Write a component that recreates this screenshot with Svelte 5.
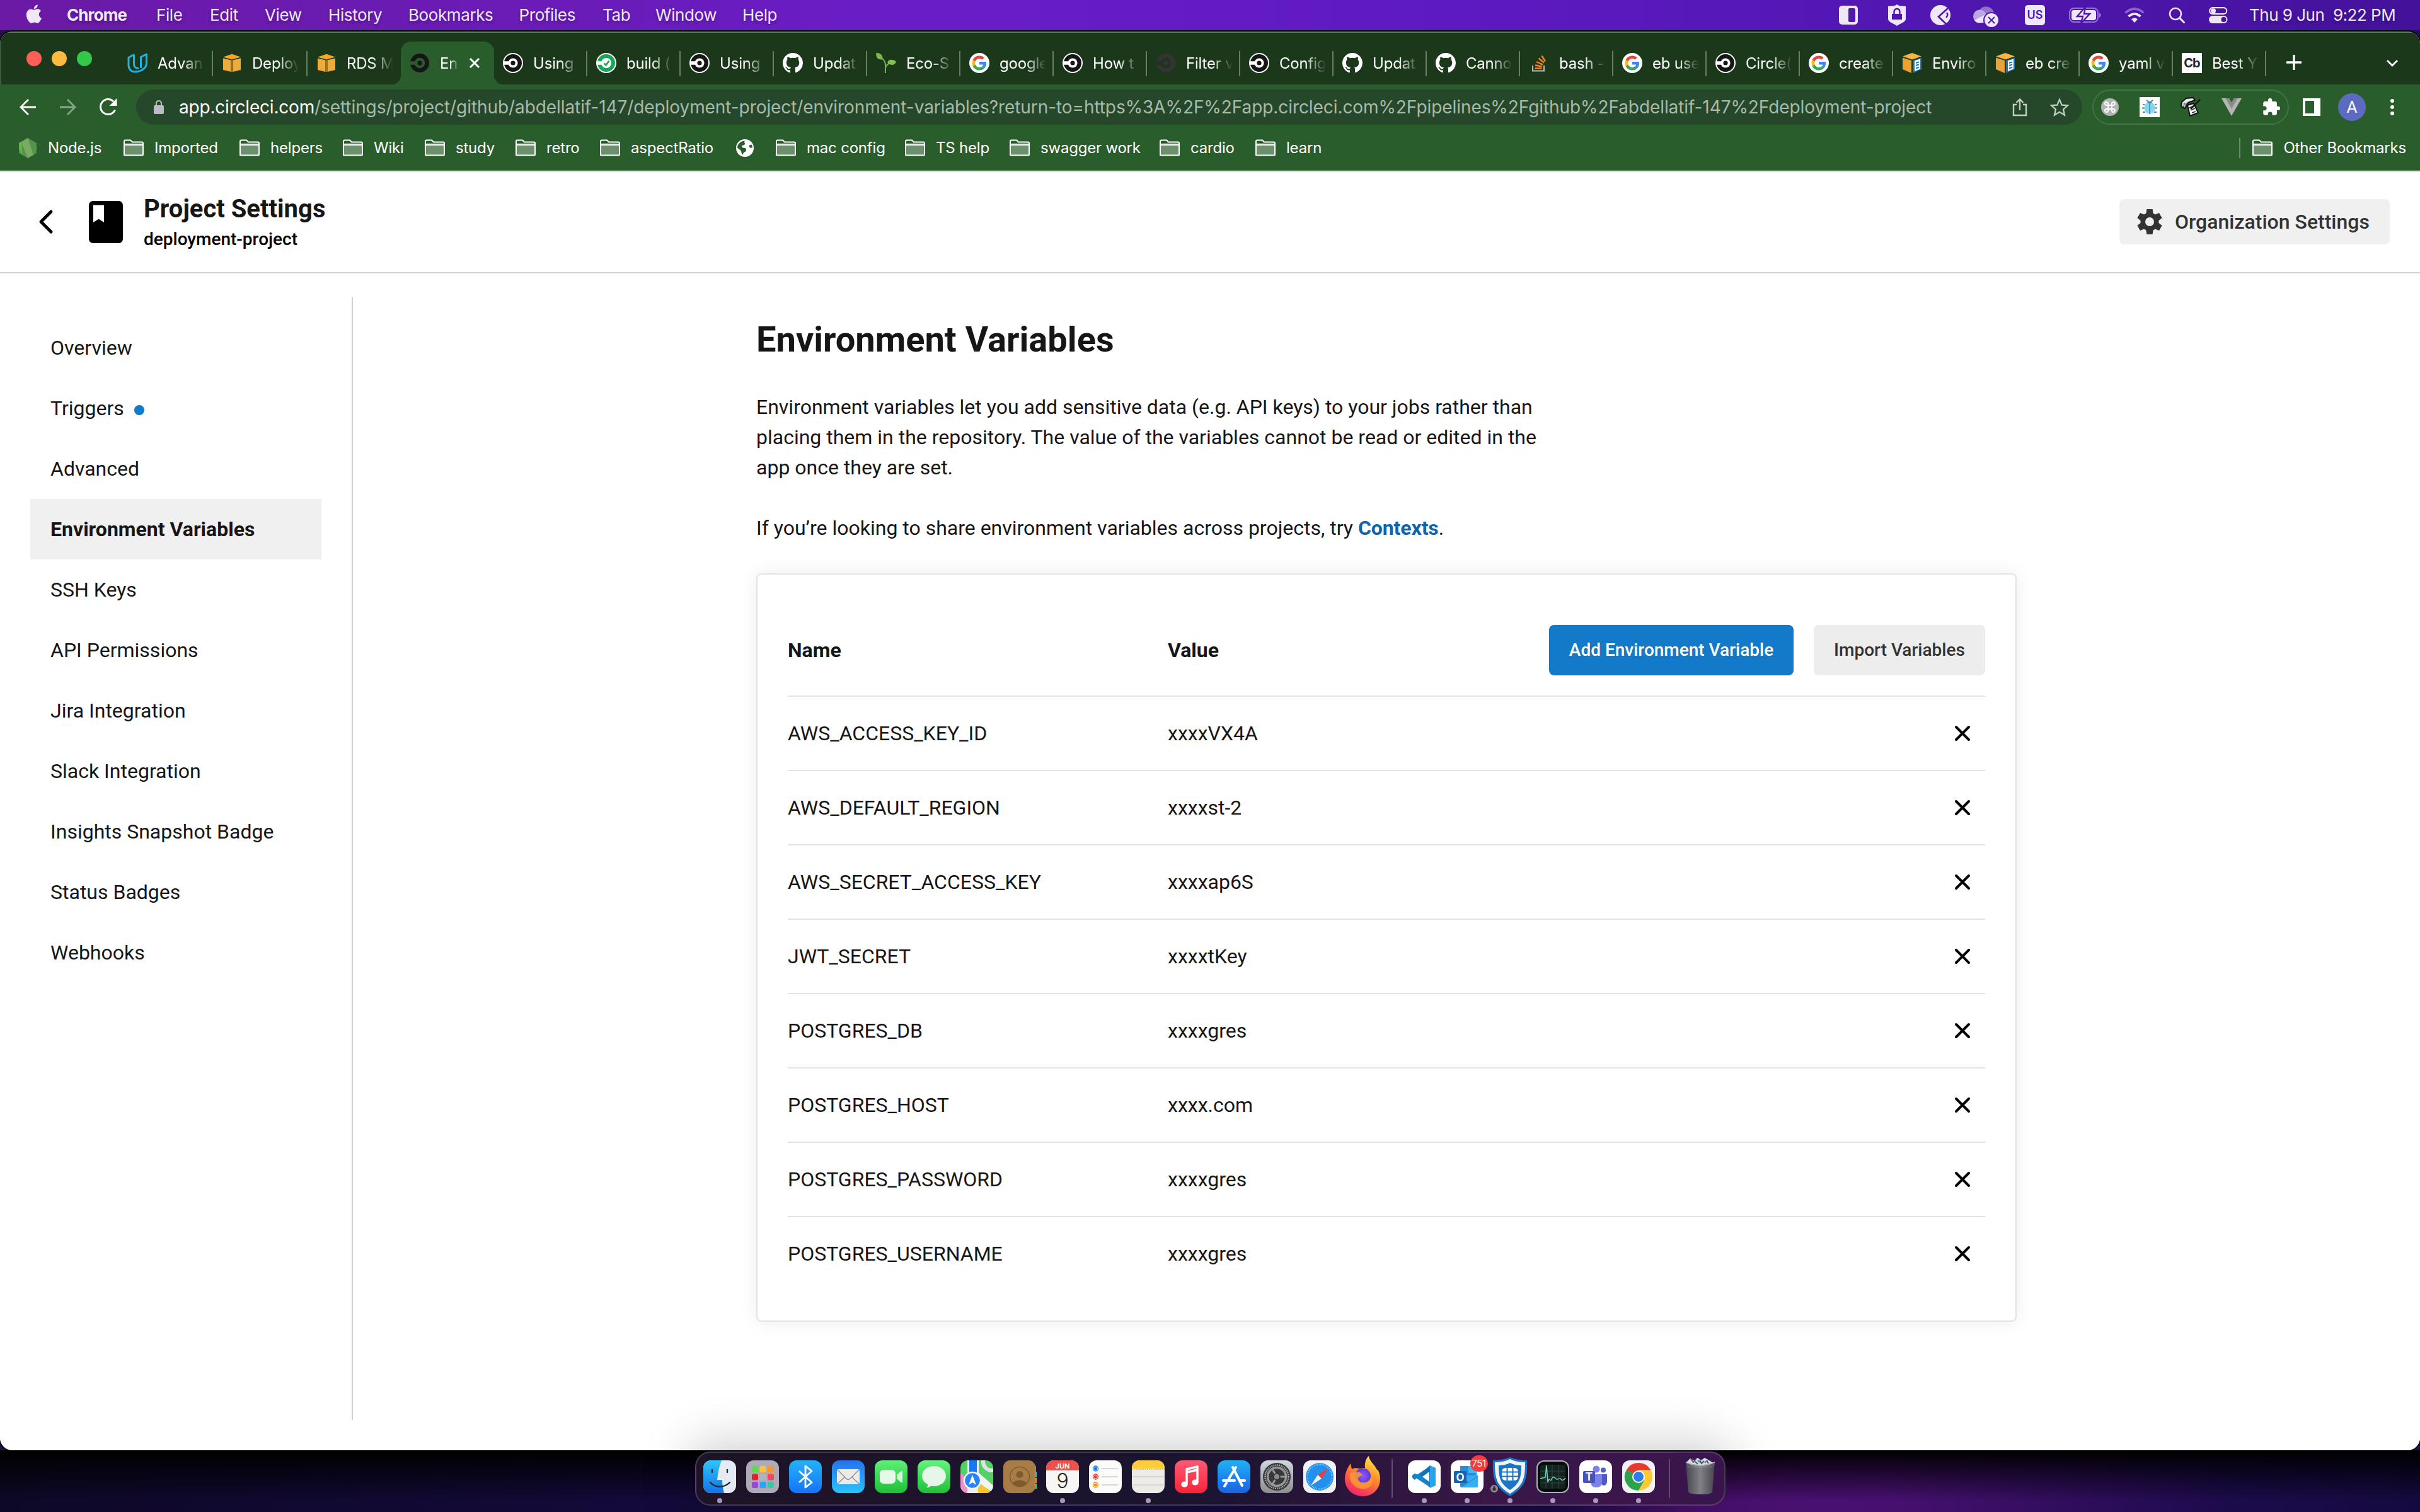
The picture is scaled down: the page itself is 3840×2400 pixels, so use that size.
<script>
  const menus = [
    { label: 'File', w: 85 },
    { label: 'Edit', w: 87 },
    { label: 'View', w: 101 },
    { label: 'History', w: 127 },
    { label: 'Bookmarks', w: 175.5 },
    { label: 'Profiles', w: 132.5 },
    { label: 'Tab', w: 84 },
    { label: 'Window', w: 138 },
    { label: 'Help', w: 60 },
  ];

  const tabs = [
    { icon: 'udacity', title: 'Advan', wide: true },
    { icon: 'aws', title: 'Deploy', wide: true },
    { icon: 'aws', title: 'RDS M', last: true },
    { icon: 'circle-dark', title: 'En', active: true },
    { icon: 'circle', title: 'Using' },
    { icon: 'build', title: 'build (' },
    { icon: 'circle', title: 'Using' },
    { icon: 'github', title: 'Updat' },
    { icon: 'eco', title: 'Eco-S' },
    { icon: 'google', title: 'google' },
    { icon: 'circle', title: 'How t' },
    { icon: 'circle-faded', title: 'Filter v' },
    { icon: 'circle', title: 'Config' },
    { icon: 'github', title: 'Updat' },
    { icon: 'github', title: 'Canno' },
    { icon: 'stack', title: 'bash -' },
    { icon: 'google', title: 'eb use' },
    { icon: 'circle', title: 'Circle(' },
    { icon: 'google', title: 'create' },
    { icon: 'beanstalk', title: 'Enviro' },
    { icon: 'beanstalk', title: 'eb cre' },
    { icon: 'google', title: 'yaml v' },
    { icon: 'cb', title: 'Best Y' },
  ];

  const bookmarks = [
    { icon: 'node', label: 'Node.js', w: 166 },
    { icon: 'folder', label: 'Imported', w: 184 },
    { icon: 'folder', label: 'helpers', w: 164 },
    { icon: 'folder', label: 'Wiki', w: 130 },
    { icon: 'folder', label: 'study', w: 144 },
    { icon: 'folder', label: 'retro', w: 134 },
    { icon: 'folder', label: 'aspectRatio', w: 216 },
    { icon: 'globe', label: '', w: 63 },
    { icon: 'folder', label: 'mac config', w: 205 },
    { icon: 'folder', label: 'TS help', w: 166 },
    { icon: 'folder', label: 'swagger work', w: 238 },
    { icon: 'folder', label: 'cardio', w: 152 },
    { icon: 'folder', label: 'learn', w: 110 },
  ];

  const nav = [
    'Overview', 'Triggers', 'Advanced', 'Environment Variables', 'SSH Keys',
    'API Permissions', 'Jira Integration', 'Slack Integration',
    'Insights Snapshot Badge', 'Status Badges', 'Webhooks',
  ];

  const variables = [
    ['AWS_ACCESS_KEY_ID', 'xxxxVX4A'],
    ['AWS_DEFAULT_REGION', 'xxxxst-2'],
    ['AWS_SECRET_ACCESS_KEY', 'xxxxap6S'],
    ['JWT_SECRET', 'xxxxtKey'],
    ['POSTGRES_DB', 'xxxxgres'],
    ['POSTGRES_HOST', 'xxxx.com'],
    ['POSTGRES_PASSWORD', 'xxxxgres'],
    ['POSTGRES_USERNAME', 'xxxxgres'],
  ];

  const dockMain = [
    { icon: 'finder', running: true }, { icon: 'launchpad' }, { icon: 'bluetooth' }, { icon: 'mail' },
    { icon: 'facetime' }, { icon: 'messages' }, { icon: 'maps' }, { icon: 'contacts' },
    { icon: 'calendar', running: true }, { icon: 'reminders' }, { icon: 'notes', running: true },
    { icon: 'music' }, { icon: 'appstore' }, { icon: 'settings' }, { icon: 'safari' }, { icon: 'firefox' },
  ];
  const dockRecent = ['vscode', 'outlook', 'shield', 'activity', 'teams', 'chrome'];
  const spokes = [0, 60, 120, 180, 240, 300];
  const padColors = ['#5fdc4a', '#ffc53a', '#f8962b', '#d92632', '#a9b5c0', '#f6455e', '#9a46d8', '#27a6f5', '#37c9a5'];
</script>

{#snippet googleG()}
  <path fill="#EA4335" d="M24 9.5c3.54 0 6.71 1.22 9.21 3.6l6.85-6.85C35.9 2.38 30.47 0 24 0 14.62 0 6.51 5.38 2.56 13.22l7.98 6.19C12.43 13.72 17.74 9.5 24 9.5z" />
  <path fill="#4285F4" d="M46.98 24.55c0-1.57-.15-3.09-.38-4.55H24v9.02h12.94c-.58 2.96-2.26 5.48-4.78 7.18l7.73 6c4.51-4.18 7.09-10.36 7.09-17.65z" />
  <path fill="#FBBC05" d="M10.53 28.59c-.48-1.45-.76-2.99-.76-4.59s.27-3.14.76-4.59l-7.98-6.19C.92 16.46 0 20.12 0 24c0 3.88.92 7.54 2.56 10.78l7.97-6.19z" />
  <path fill="#34A853" d="M24 48c6.48 0 11.93-2.13 15.89-5.81l-7.73-6c-2.15 1.45-4.92 2.3-8.16 2.3-6.26 0-11.57-4.22-13.47-9.91l-7.98 6.19C6.51 42.62 14.62 48 24 48z" />
{/snippet}

{#snippet ring(color, gap)}
  <circle cx="16" cy="16" r="15" fill={color} />
  <circle cx="16" cy="16" r="8.2" fill={gap} />
  <path d="M0 13.2H12v5.6H0z" fill={gap} />
  <circle cx="16" cy="16" r="3.8" fill={color} />
{/snippet}

{#snippet favicon(kind)}
  <svg class="favicon" viewBox="0 0 32 32">
    {#if kind === 'udacity'}
      <path d="M10.5 2.5 2 7.5v12c0 6 4 10.5 10 10.5 8 0 18.500-4.500 18.500-14V2L21.500 6.500V24M10.500 2.500V18c0 4 3 6.500 7.500 6.500" fill="none" stroke="#1fb3e5" stroke-width="3" stroke-linejoin="round" />
    {:else if kind === 'aws'}
      <path d="M2 6.500 16 1.800l14 4.700-14 4z" fill="#f5a623" />
      <path d="M2 8.500 14.500 11.500V30L2 27z" fill="#edab3c" />
      <path d="M17.500 11.500 30 8.500V27l-12.500 3z" fill="#edab3c" />
      <path d="M14.500 11.500h3V30h-3z" fill="#94761f" />
    {:else if kind === 'circle-dark'}
      {@render ring('#161616', '#2a5d2c')}
    {:else if kind === 'circle-faded'}
      {@render ring('#333433', '#22331f')}
    {:else if kind === 'circle'}
      <circle cx="16" cy="16" r="16" fill="#fff" />
      <circle cx="16" cy="16" r="14" fill="#161616" />
      <circle cx="16" cy="16" r="7.600" fill="#fff" />
      <path d="M1 13.200h10v5.600H1z" fill="#fff" />
      <circle cx="16" cy="16" r="3.600" fill="#161616" />
    {:else if kind === 'build'}
      <circle cx="16" cy="16" r="16" fill="#fff" />
      <circle cx="16" cy="16" r="14" fill="#1ba558" />
      <circle cx="16" cy="16" r="8" fill="#fff" />
      <path d="M1 13.200h10v5.600H1z" fill="#fff" />
      <path d="m12.500 16.500 3 3 5-7" fill="none" stroke="#1ba558" stroke-width="2.600" />
    {:else if kind === 'github'}
      <path transform="scale(2)" fill="#fff" d="M8 0C3.580 0 0 3.580 0 8c0 3.540 2.290 6.530 5.470 7.590.4.070.55-.17.55-.38 0-.19-.01-.82-.01-1.490-2.010.37-2.530-.49-2.690-.94-.09-.23-.48-.94-.82-1.130-.28-.15-.68-.52-.01-.53.63-.01 1.080.58 1.230.82.72 1.210 1.870.87 2.330.66.07-.52.28-.87.51-1.070-1.780-.2-3.640-.89-3.640-3.950 0-.87.31-1.590.82-2.150-.08-.2-.36-1.020.08-2.120 0 0 .67-.21 2.200.82.64-.18 1.320-.27 2-.27s1.360.09 2 .27c1.530-1.040 2.200-.82 2.200-.82.44 1.100.16 1.920.08 2.120.51.56.82 1.270.82 2.150 0 3.070-1.870 3.750-3.650 3.950.29.25.54.73.54 1.480 0 1.070-.01 1.930-.01 2.200 0 .21.15.46.55.38A8.010 8.010 0 0 0 16 8c0-4.420-3.580-8-8-8z" />
    {:else if kind === 'eco'}
      <path d="M15 32V20C15 12 11 10 6 5m9 19c1-5 4-7 10-9" fill="none" stroke="#74b04b" stroke-width="2" />
      <path d="M0 0c7 0 11 3 10.500 10C4 12 0 8 0 0z" fill="#7fb94e" />
      <path d="M18 15c2-5 9-6 14-1-2 6-9 7-14 1z" fill="#84c04e" />
    {:else if kind === 'google'}
      <circle cx="16" cy="16" r="16" fill="#fff" />
      <g transform="translate(4.500 4.500) scale(.48)">{@render googleG()}</g>
    {:else if kind === 'stack'}
      <path d="M6 20v8.500h18V20" fill="none" stroke="#b8bcc0" stroke-width="2" />
      <path d="M9.500 24.500h11M10 19.500l10.800 2M12 14l10 4.600M15.500 8.500l8.500 7M20.500 4.500l5.500 9" stroke="#f48024" stroke-width="2.400" />
    {:else if kind === 'beanstalk'}
      <path d="M1 5.500 16 0l15 5.500-15 5z" fill="#f6b545" />
      <path d="M1 7.500 15 12v20L1 26z" fill="#e9a234" />
      <path d="M17 12 31 7.500V26l-14 6z" fill="#1a76b5" />
      <path d="M20 12.500 29 9.500v16l-9 3.500z" fill="#fff" />
      <path d="m22 16 5-1.600M22 20l5-1.600M22 24.500l5-1.600" stroke="#1a76b5" stroke-width="2" />
    {:else if kind === 'cb'}
      <path d="M0 0h32v32H0z" fill="#fff" />
      <text x="16" y="23" text-anchor="middle" class="cb">Cb</text>
    {/if}
  </svg>
{/snippet}

{#snippet folder()}
  <svg class="bm-icon" viewBox="0 0 32 32">
    <path d="M1 8h30v19H1z" fill="#6c906c" />
    <path d="M1 28V5.500q0-2 2-2h8l3 3h15q2 0 2 2V26.500q0 1-1 1H2q-1 0-1-1zM1 11h30" fill="none" stroke="#fff" stroke-width="2" />
  </svg>
{/snippet}

{#snippet dockIcon(kind)}
  <svg class="app" viewBox="0 0 52 52">
    {#if kind === 'finder'}
      <defs><linearGradient id="fi" x2="0" y2="1"><stop stop-color="#2ec5fa" /><stop offset="1" stop-color="#1672e6" /></linearGradient></defs>
      <rect width="52" height="52" rx="12" fill="#e6ebf3" />
      <path d="M12 0H29c-4 10-6 20-7 31h8c0 7 1 14 3 21H12A12 12 0 0 1 0 40V12A12 12 0 0 1 12 0z" fill="url(#fi)" />
      <path d="M14 15v4M38 15v4M11 35c8 9 22 9 31 0" fill="none" stroke="#1c2c3e" stroke-width="2.400" stroke-linecap="round" />
    {:else if kind === 'launchpad'}
      <rect width="52" height="52" rx="12" fill="#aeabb7" />
      {#each padColors as c, i}
        <rect x={9 + (i % 3) * 12.500} y={9 + Math.floor(i / 3) * 12.500} width="10" height="10" rx="2.500" fill={c} />
      {/each}
    {:else if kind === 'bluetooth'}
      <defs><linearGradient id="bt" x2="0" y2="1"><stop stop-color="#23b2fb" /><stop offset="1" stop-color="#1574f6" /></linearGradient></defs>
      <rect width="52" height="52" rx="12" fill="url(#bt)" />
      <path d="m16 17 20 18-10 8V9l10 8-20 18" fill="none" stroke="#fff" stroke-width="2.800" stroke-linejoin="round" />
    {:else if kind === 'mail'}
      <defs><linearGradient id="ml" x2="0" y2="1"><stop stop-color="#2571ee" /><stop offset="1" stop-color="#28c4fb" /></linearGradient></defs>
      <rect width="52" height="52" rx="12" fill="url(#ml)" />
      <rect x="8" y="14" width="36" height="24" rx="3" fill="#ecebea" />
      <path d="m9 15 14 14q3 3 6 0l14-14M9 37l12-11m22 11L31 26" fill="none" stroke="#8c8c8c" stroke-width="1.300" />
    {:else if kind === 'facetime'}
      <defs><linearGradient id="ft" x2="0" y2="1"><stop stop-color="#5ff077" /><stop offset="1" stop-color="#1fbf38" /></linearGradient></defs>
      <rect width="52" height="52" rx="12" fill="url(#ft)" />
      <rect x="8" y="15" width="25" height="22" rx="6" fill="#e6f8e8" />
      <path d="m35 23 7-6q2-1 2 1v16q0 2-2 1l-7-6z" fill="#d7f3da" />
    {:else if kind === 'messages'}
      <defs><linearGradient id="ms" x2="0" y2="1"><stop stop-color="#65f47d" /><stop offset="1" stop-color="#1fbf38" /></linearGradient></defs>
      <rect width="52" height="52" rx="12" fill="url(#ms)" />
      <path d="M26 9c11 0 19 7 19 16s-8 16-19 16l-5-.5c-1 1.500-4 3-7 2.500 1.500-1 2.500-3 2-5C10 35 7 30 7 25 7 16 15 9 26 9z" fill="#e5f8e7" />
    {:else if kind === 'maps'}
      <defs><clipPath id="mp"><rect width="52" height="52" rx="12" /></clipPath></defs>
      <g clip-path="url(#mp)">
        <path d="M0 0h52v52H0z" fill="#56cf66" />
        <path d="M0 20c8 6 12 14 12 32H0z" fill="#ef8fcb" />
        <path d="M11 0h18v52H11z" fill="#e9edf4" />
        <path d="m27 18 25 22v12L27 34z" fill="#f4f4f2" />
        <path d="m28 34 22 18H28z" fill="#fcc52d" />
        <circle cx="50" cy="2" r="14" fill="none" stroke="#dfe5e4" stroke-width="6" />
        <path d="M14 0h12v24H14z" fill="#1877f2" />
        <circle cx="19" cy="32" r="13" fill="#2384fb" stroke="#f4f7fb" stroke-width="2.500" />
        <path d="m19 23 6 16-6-4-6 4z" fill="#fff" />
      </g>
    {:else if kind === 'contacts'}
      <path d="M44 9h8v9h-8z" fill="#8f9099" /><path d="M44 18h9v9h-9z" fill="#4db7e9" />
      <path d="M44 28h9v8h-9z" fill="#f38a2e" /><path d="M44 37h9v8h-9z" fill="#4fce65" />
      <rect width="51" height="52" rx="11" fill="#a87c46" />
      <circle cx="26" cy="26" r="15.500" fill="none" stroke="#805a2d" stroke-width="1.500" />
      <circle cx="26" cy="22.500" r="5.500" fill="#805a2d" />
      <path d="M15 36c3-6 19-6 22 0-5 6.500-17 6.500-22 0z" fill="#805a2d" />
    {:else if kind === 'calendar'}
      <rect width="52" height="52" rx="12" fill="#f7f6f4" />
      <path d="M12 0h28a12 12 0 0 1 12 12v4H0v-4A12 12 0 0 1 12 0z" fill="#ee5149" />
      <text x="26" y="12.500" text-anchor="middle" class="month">JUN</text>
      <text x="26" y="43.500" text-anchor="middle" class="day">9</text>
    {:else if kind === 'reminders'}
      <rect width="52" height="52" rx="12" fill="#fbfbfa" />
      {#each ['#1878f0', '#ec3b36', '#f08d20'] as c, i}
        <circle cx="10.500" cy={13 + i * 13} r="4" fill="none" stroke={c} stroke-width="1.300" />
        <circle cx="10.500" cy={13 + i * 13} r="2.600" fill={c} />
        <path d="M20 {13 + i * 13}h26" stroke="#cfcfcf" stroke-width="1.600" />
      {/each}
    {:else if kind === 'notes'}
      <rect width="52" height="52" rx="12" fill="#edebe5" />
      <path d="M12 0h28a12 12 0 0 1 12 12v1H0v-1A12 12 0 0 1 12 0z" fill="#fccc3a" />
      <path d="M0 14h52" stroke="#c9c3b2" stroke-dasharray="1.500 1.500" stroke-width="2" />
      <path d="M0 26h52M0 39h52" stroke="#d3d0ca" stroke-width="1.500" />
    {:else if kind === 'music'}
      <defs><linearGradient id="mu" x2="0" y2="1"><stop stop-color="#fb5b74" /><stop offset="1" stop-color="#f9233c" /></linearGradient></defs>
      <rect width="52" height="52" rx="12" fill="url(#mu)" />
      <path d="M19 37V14l17-4v24M19 19l17-4" fill="none" stroke="#fff" stroke-width="3.400" stroke-linejoin="round" />
      <ellipse cx="15.500" cy="38" rx="5.200" ry="4.600" fill="#fff" /><ellipse cx="32.500" cy="35" rx="5.200" ry="4.600" fill="#fff" />
    {:else if kind === 'appstore'}
      <defs><linearGradient id="as" x2="0" y2="1"><stop stop-color="#21b0f4" /><stop offset="1" stop-color="#1a62e2" /></linearGradient></defs>
      <rect width="52" height="52" rx="12" fill="url(#as)" />
      <path d="M29 11 18 29m-4 7-3 5M24 11l15 29M9 32h18m9 0h7" stroke="#fff" stroke-width="4" stroke-linecap="round" />
    {:else if kind === 'settings'}
      <defs><linearGradient id="st" x2="0" y2="1"><stop stop-color="#ced8df" /><stop offset="1" stop-color="#8d8d8f" /></linearGradient></defs>
      <rect width="52" height="52" rx="12" fill="url(#st)" />
      <circle cx="26" cy="26" r="22" fill="#38383a" />
      <circle cx="26" cy="26" r="18.500" fill="none" stroke="#a4a4a6" stroke-width="2.500" stroke-dasharray="1.800 1.200" />
      <circle cx="26" cy="26" r="14.500" fill="none" stroke="#97979a" stroke-width="3.500" />
      <path d="M26 26h14M26 26l-7-12M26 26l-7 12" stroke="#97979a" stroke-width="3" />
      <circle cx="26" cy="26" r="5" fill="#8a8a8c" stroke="#333" stroke-width="1.500" />
    {:else if kind === 'safari'}
      <rect width="52" height="52" rx="12" fill="#f2f2f3" />
      <circle cx="26" cy="26" r="22" fill="#2490ee" />
      <circle cx="26" cy="26" r="19.500" fill="none" stroke="#a5d4fa" stroke-width="2.500" stroke-dasharray=".8 1.700" />
      <path d="m40 12-11 17-6-6z" fill="#ee3c3c" /><path d="m12 40 11-17 6 6z" fill="#f3f3f5" />
    {:else if kind === 'firefox'}
      <defs>
        <linearGradient id="ff" x1=".8" y1="0" x2=".3" y2="1"><stop stop-color="#fff04a" /><stop offset=".45" stop-color="#ff8a2a" /><stop offset="1" stop-color="#f41e6e" /></linearGradient>
        <radialGradient id="fp"><stop stop-color="#9059ff" /><stop offset="1" stop-color="#5c3ad6" /></radialGradient>
      </defs>
      <path d="M36-7c1 9 9 13 13 22l2 1c9 20-3 41-24 41C8 57-3 43-2 27-1 18 2 13 7 5l2 9C12 12 16 12 20 13l10-1C29 5 31-3 36-7z" fill="url(#ff)" />
      <circle cx="26.500" cy="25" r="12.500" fill="url(#fp)" />
      <path d="M6 22c5-5 12-3 16-3l4 4c-2 2-6 2-7 5-1 4 4 8 10 7 8-1 12-7 10-14 9 15-1 25-14 24C13 44 4 34 6 22z" fill="#ff9a30" opacity=".85" />
    {:else if kind === 'vscode'}
      <rect width="52" height="52" rx="12" fill="#fff" />
      <path d="m35 8-24 22-4-3v-3l4-3 24 22z" fill="#1272b8" />
      <path d="m11 21-4 3 27 18 1-12zM7 28l4 3L35 9z" fill="#1684cc" />
      <path d="m35 8 9 4v28l-9 4z" fill="#2aa3ee" /><path d="M34 18v16L23 26z" fill="#fff" />
    {:else if kind === 'outlook'}
      <rect width="52" height="52" rx="12" fill="#fff" />
      <path d="M15 9h26v20H15z" fill="#1f8fe0" /><path d="M28 9h13v11H28z" fill="#43b5f0" />
      <path d="M15 24 43 24V41q0 2-2 2H17q-2 0-2-2z" fill="#36aef0" /><path d="m15 25 14 9 14-10v2L17 43l-2-2z" fill="#1668b8" opacity=".5" />
      <rect x="5" y="17" width="20" height="19" rx="2" fill="#0f64b8" />
      <text x="15" y="32.500" text-anchor="middle" class="tile-letter">O</text>
    {:else if kind === 'shield'}
      <path d="M26-5c9 4 18 5 27 5 1 29-2 42-27 57C1 42-2 29-1 0 8 0 17-1 26-5z" fill="#1b75c5" />
      <path d="M26-2c8 4 16 5 24 5 0 27-3 37-24 50C5 40 2 30 2 3c8 0 16-1 24-5z" fill="#f0f3f6" />
      <path d="M26 4c6 3 12 4 18 4 0 20-3 29-18 39C11 37 8 28 8 8c6 0 12-1 18-4z" fill="#1c74c4" />
      <rect x="13" y="12" width="26" height="20" rx="6" fill="#fff" />
      <path d="M21.500 12v20M30.500 12v20M13 18.500h26M13 25.500h26" stroke="#1c74c4" stroke-width="2" />
      <circle cx="1" cy="45" r="6" fill="#8b8b8e" /><path d="M-1.500 44h5v4h-5zM-.5 44v-2q1.500-2 3 0v2" fill="#333" />
    {:else if kind === 'activity'}
      <rect width="52" height="52" rx="12" fill="#a9b2b8" /><rect x="2" y="2" width="48" height="48" rx="10" fill="#08090a" />
      <rect x="6" y="7" width="40" height="38" rx="4" fill="#14231f" />
      <path d="M6 17h40M6 26h40M6 36h40M15 7v38M25 7v38M35 7v38" stroke="#2a4a42" stroke-width="1" />
      <path d="M6 29c4-2 6 0 8-2l2-19 2 27c3-11 4 1 6-5 3-8 6 0 8 0l6-1c2 3 4 4 8-1" fill="none" stroke="#74cdb6" stroke-width="1.500" />
    {:else if kind === 'teams'}
      <rect width="52" height="52" rx="12" fill="#fff" />
      <circle cx="38" cy="15.500" r="4" fill="#5059c9" /><circle cx="27" cy="14" r="5.500" fill="#7b83eb" />
      <path d="M34 22h10v11q0 6-5 7-5-1-5-6z" fill="#5059c9" /><path d="M18 22h18v12q0 9-9 9t-9-9z" fill="#7b83eb" />
      <rect x="6" y="17" width="19" height="19" rx="2" fill="#4a53bb" />
      <text x="15.500" y="32" text-anchor="middle" class="tile-letter">T</text>
    {:else if kind === 'chrome'}
      <rect width="52" height="52" rx="12" fill="#f2f2f4" />
      <path d="M26 26 6.900 15A22 22 0 0 1 45.100 15z" fill="#e33b2e" />
      <path d="M26 26 6.900 15A22 22 0 0 0 26 48l9.500-16.500z" fill="#2da24c" />
      <path d="M26 26V15h19.100A22 22 0 0 1 26 48l9.500-16.500z" fill="#fcc934" />
      <circle cx="26" cy="26" r="10" fill="#fff" /><circle cx="26" cy="26" r="8" fill="#2f7be8" />
    {:else if kind === 'trash'}
      <defs><linearGradient id="tr"><stop stop-color="#48494d" /><stop offset=".5" stop-color="#88898c" /><stop offset="1" stop-color="#47474b" /></linearGradient></defs>
      <path d="m4 3 6-6 6 3 6-4 5 4 6-4 7 4 8 5-2 7H6z" fill="#dcdcde" />
      <path d="m11-2 4 5 4-5m6 2 3 5 4-4m4-1 3 5M18 2l4 4" stroke="#4d565e" stroke-width="2" fill="none" /><path d="m22 0 3 3m8 1 3-3" stroke="#2d8cd0" stroke-width="2" />
      <path d="M3 3q23 10 46 0l-4 47q-1 4-19 4T7 50z" fill="url(#tr)" opacity=".93" />
      <path d="M3 3q23 10 46 0" fill="none" stroke="#b4b4b8" stroke-width="1.600" />
    {/if}
  </svg>
{/snippet}

<div class="screen">
  <header class="menubar">
    <svg class="apple" viewBox="0 0 26 32"><path fill="#efe8f8" d="M21.400 16.900c0-3.500 2.900-5.200 3-5.300-1.700-2.400-4.200-2.700-5.100-2.800-2.200-.2-4.200 1.300-5.300 1.300s-2.800-1.200-4.600-1.200c-2.300 0-4.500 1.400-5.700 3.500-2.500 4.200-.6 10.500 1.700 13.900 1.200 1.700 2.500 3.600 4.400 3.500 1.800-.1 2.400-1.100 4.600-1.100 2.100 0 2.700 1.100 4.600 1.100s3.100-1.700 4.300-3.400c1.300-2 1.900-3.900 1.900-4-.1 0-3.800-1.400-3.800-5.500zM17.900 6.700c1-1.200 1.600-2.800 1.400-4.400-1.400.1-3.100.9-4 2.100-.9 1-1.700 2.700-1.500 4.200 1.500.1 3.100-.8 4.100-1.900z" /></svg>
    <span class="app-name">Chrome</span>
    {#each menus as m}
      <span class="menu" style:width="{m.w}px">{m.label}</span>
    {/each}
    <div class="status">
      <svg class="s30" viewBox="0 0 30 30"><rect width="30" height="30" rx="5" fill="#eee7fa" /><rect x="15" y="4" width="11" height="22" rx="2" fill="#5216b0" /></svg>
      <svg class="s-shield" viewBox="0 0 30 34"><path d="M15 0c4 3 8 2.500 14 3v20c0 5-8 7-14 11C9 30 1 28 1 23V3c6-.5 10 0 14-3z" fill="#eee7fa" /><path d="M7 15h16v9H7z" fill="#5015ad" /><path d="M10.500 15v-3q0-5 4.500-5t4.500 5v3" fill="none" stroke="#5015ad" stroke-width="2.400" /></svg>
      <svg class="s-pac" viewBox="0 0 32 32"><circle cx="16" cy="16" r="16" fill="#eee7fa" /><path d="M28 5 13 18.500 25 30" fill="none" stroke="#5015ad" stroke-width="2.600" /><path d="M26 12q3 4-1 8" fill="none" stroke="#5015ad" stroke-width="2.400" /></svg>
      <svg class="s-cloud" viewBox="0 0 42 36"><path d="M10 8C13-1 29-1 33 11l-12 8z" fill="#9270cf" /><circle cx="10.500" cy="17" r="10.500" fill="#bba7e3" /><path d="M2 23 24 12l8 15H9q-5 0-7-4z" fill="#eee7fa" /><circle cx="29" cy="23" r="13" fill="#5015ad" /><circle cx="29" cy="23" r="11" fill="#eee7fa" /><path d="m24 18 10 10m0-10L24 28" stroke="#5015ad" stroke-width="2" /></svg>
      <span class="lang">US</span>
      <svg class="s-batt" viewBox="0 0 52 26"><rect x="1" y="2" width="45" height="22" rx="7" fill="none" stroke="#9673d3" stroke-width="2" /><path d="M48 9q6 4 0 8z" fill="#9673d3" /><rect x="4" y="5" width="39" height="16" rx="4" fill="#eee7fa" /><path d="M26 0 13 15h9l-3 11 14-15h-9z" fill="#eee7fa" stroke="#4e15ab" stroke-width="2.400" /></svg>
      <svg class="s-wifi" viewBox="0 0 32 24"><path d="M1.500 8.500q14.500-13 29 0" fill="none" stroke="#8a63cd" stroke-width="3.600" /><path d="M6.500 14q9.500-8 19 0" fill="none" stroke="#eee7fa" stroke-width="3.600" /><path d="M11 18.500q5-4 10 0L16 24z" fill="#eee7fa" /></svg>
      <svg class="s-search" viewBox="0 0 28 26"><circle cx="11" cy="11" r="9" fill="none" stroke="#eee7fa" stroke-width="2.600" /><path d="m17.500 17.500 7 7" stroke="#eee7fa" stroke-width="3" stroke-linecap="round" /></svg>
      <svg class="s-cc" viewBox="0 0 30 26"><rect x="1.200" y="1.200" width="27" height="10" rx="5" fill="none" stroke="#eee7fa" stroke-width="2.200" /><circle cx="7" cy="6.200" r="4" fill="#eee7fa" /><rect y="14" width="29.500" height="12" rx="6" fill="#eee7fa" /><circle cx="23.500" cy="20" r="4" fill="#4712a0" /></svg>
      <span class="clock">Thu 9 Jun&nbsp; 9:22 PM</span>
    </div>
  </header>

  <main class="window">
    <div class="tabstrip">
      <div class="lights"><i class="red"></i><i class="yellow"></i><i class="green"></i></div>
      {#each tabs as t}
        <div class="tab" class:wide={t.wide} class:active={t.active} class:last={t.last}>
          {@render favicon(t.icon)}
          <span class="tab-title">{t.title}</span>
          {#if t.active}
            <svg class="tab-close" viewBox="0 0 18 18"><path d="m2 2 14 14m0-14L2 16" stroke="#fff" stroke-width="3" /></svg>
          {/if}
        </div>
      {/each}
      <svg class="plus" viewBox="0 0 24 24"><path d="M12 0v24M0 12h24" stroke="#fff" stroke-width="3.400" /></svg>
      <svg class="chev" viewBox="0 0 20 12"><path d="m2 2 8 8 8-8" fill="none" stroke="#fff" stroke-width="2.800" /></svg>
    </div>

    <div class="toolbar">
      <svg class="t-back" viewBox="0 0 28 28"><path d="M27 14H3M15 2 3 14l12 12" fill="none" stroke="#fff" stroke-width="2.800" /></svg>
      <svg class="t-fwd" viewBox="0 0 28 28"><path d="M1 14h24M13 2l12 12-12 12" fill="none" stroke="#86a687" stroke-width="2.800" /></svg>
      <svg class="t-reload" viewBox="0 0 28 28"><path d="M24.500 18.500A12 12 0 1 1 22 5" fill="none" stroke="#fff" stroke-width="3" /><path d="M27.500 0v12H15.500z" fill="#fff" /></svg>
      <div class="omnibox">
        <svg class="lock" viewBox="0 0 16 22"><rect y="8" width="16" height="14" rx="2" fill="#b9bcc2" /><path d="M4 9V5.500q0-4.500 4-4.500t4 4.500V9" fill="none" stroke="#b9bcc2" stroke-width="2" /></svg>
        <span class="url"><b>app.circleci.com</b>/settings/project/github/abdellatif-147/deployment-project/environment-variables?return-to=https%3A%2F%2Fapp.circleci.com%2Fpipelines%2Fgithub%2Fabdellatif-147%2Fdeployment-project</span>
        <svg class="share" viewBox="0 0 24 30"><path d="M7 11H2v17h20V11h-5M12 20V3M6.500 8 12 2.500 17.500 8" fill="none" stroke="#c4cdc4" stroke-width="2.400" /></svg>
        <svg class="star" viewBox="0 0 32 30"><path d="m16 3 3.700 8.600 9.300.8-7 6.200 2.100 9.100L16 22.900l-8.100 4.800L10 18.600l-7-6.200 9.300-.8z" fill="none" stroke="#c4cdc4" stroke-width="2.200" /></svg>
      </div>
      <div class="extensions">
        <svg class="e-cmd" viewBox="0 0 28 28"><circle cx="14" cy="14" r="14" fill="#b3b3b3" /><path d="M11 11h6v6h-6zM11 11H8.500A2.500 2.500 0 1 1 11 8.500zM17 11h2.500A2.500 2.500 0 1 0 17 8.500zM11 17H8.500A2.500 2.500 0 1 0 11 19.500zM17 17h2.500a2.500 2.500 0 1 1-2.500 2.500z" fill="none" stroke="#fff" stroke-width="1.800" /></svg>
        <svg class="e-bug" viewBox="0 0 32 32"><path d="M0 0h32v32H0z" fill="#fff" /><path d="m11 5 5 4 5-4M4 17.500h5m14 0h5M5 12h3m16 0h3M5 24h4m14 0h4" stroke="#3b87b8" stroke-width="2" fill="none" /><ellipse cx="16" cy="17.500" rx="8.500" ry="9.500" fill="#86d5ea" /><path d="M16 9v18" stroke="#3b87b8" stroke-width="1.500" /><path d="M11 9.500q5-4 10 0z" fill="#3b87b8" /></svg>
        <svg class="e-pen" viewBox="0 0 32 32"><path d="m1 15 1-7 7-6 11-1 3 4-11 4-5 9z" fill="#e8e8e8" stroke="#111" stroke-width="2" stroke-linejoin="round" /><path d="m11 13 10-3 7 15-13 5z" fill="#f4f4f4" stroke="#111" stroke-width="2" stroke-linejoin="round" /><path d="m6 9-1 8m4-8-1 8M14 17l5-2m-3 6 7-3m-5 7 6-2" stroke="#333" stroke-width="1.500" /><path d="M31 4 16 19" stroke="#1a1a1a" stroke-width="2.600" /></svg>
        <svg class="e-vue" viewBox="0 0 32 28"><path d="M0 0h12l4 7 4-7h12L16 28z" fill="#b4b4b4" /><path d="M6.500 0H12l4 7 4-7h5.500L16 16.500z" fill="#868c86" /></svg>
        <svg class="e-puz" viewBox="0 0 22 22"><path fill="#fff" d="M19.500 10H18V6c0-1.100-.9-2-2-2h-4V2.500a2.500 2.500 0 0 0-5 0V4H3c-1.100 0-2 .9-2 2v3.800h1.500a2.700 2.700 0 0 1 0 5.400H1V19c0 1.100.9 2 2 2h3.800v-1.500a2.700 2.700 0 0 1 5.400 0V21H16c1.100 0 2-.9 2-2v-4h1.500a2.500 2.500 0 0 0 0-5z" /></svg>
      </div>
      <svg class="t-panel" viewBox="0 0 28 28"><path fill="#fff" fill-rule="evenodd" d="M0 0h28v28H0zM4 4v20h14V4z" /></svg>
      <span class="avatar">A</span>
      <svg class="t-dots" viewBox="0 0 6 26"><circle cx="3" cy="3" r="3" fill="#fff" /><circle cx="3" cy="13" r="3" fill="#fff" /><circle cx="3" cy="23" r="3" fill="#fff" /></svg>
    </div>

    <div class="bookmarks">
      {#each bookmarks as b}
        <div class="bookmark" style:width="{b.w}px">
          {#if b.icon === 'folder'}
            {@render folder()}
          {:else if b.icon === 'node'}
            <svg class="node" viewBox="0 0 28 32"><path d="m14 0 14 8v16l-14 8-14-8V8z" fill="#55934a" /><path d="m14 0 9 27-9 5L4 7z" fill="#7bab63" /><path d="M14 0 0 8v8L6 28 4 6z" fill="#61b74c" /></svg>
          {:else}
            <svg class="globe" viewBox="0 0 28 28"><circle cx="14" cy="14" r="14" fill="#fff" /><path d="M15 2.500c-3 1-2 3-1 4s-1 3-3 3-3 3 0 4 5 0 5 3-1 3-3 4-1 3-3 4c-2-2-1-5-3-7s-5-3-5-5c1-6 6-10 13-10zM25 9c-3-1-5 1-4 3s3 2 5 1z" fill="#2a5d2c" /></svg>
          {/if}
          {#if b.label}<span>{b.label}</span>{/if}
        </div>
      {/each}
      <div class="other">{@render folder()}<span>Other Bookmarks</span></div>
    </div>

    <section class="page">
      <div class="page-header">
        <svg class="back" viewBox="0 0 24 38"><path d="M20 3 4 19l16 16" fill="none" stroke="#000" stroke-width="5" stroke-linecap="round" stroke-linejoin="round" /></svg>
        <svg class="book" viewBox="0 0 54 67"><rect width="54" height="67" rx="6.500" fill="#000" /><path d="M7 6.500h17v27.500l-8.500-5.500L7 34z" fill="#fff" /></svg>
        <div class="titles">
          <strong>Project Settings</strong>
          <span>deployment-project</span>
        </div>
        <button class="org">
          <svg viewBox="0 0 40 40">
            <circle cx="20" cy="20" r="14.500" fill="#333" />
            {#each spokes as a}
              <path d="M14.200 8 15.400 0h9.200l1.200 8z" fill="#333" transform="rotate({a} 20 20)" />
            {/each}
            <circle cx="20" cy="20" r="7" fill="#f0f0f0" />
          </svg>
          Organization Settings
        </button>
      </div>

      <div class="body">
        <nav>
          {#each nav as item}
            <a class:current={item === 'Environment Variables'}>{item}{#if item === 'Triggers'}<i></i>{/if}</a>
          {/each}
        </nav>
        <article>
          <h1>Environment Variables</h1>
          <p>Environment variables let you add sensitive data (e.g. API keys) to your jobs rather than<br />placing them in the repository. The value of the variables cannot be read or edited in the<br />app once they are set.</p>
          <p>If you’re looking to share environment variables across projects, try <b>Contexts</b>.</p>
          <div class="card">
            <div class="row head">
              <span class="name">Name</span>
              <span class="value">Value</span>
              <button class="primary">Add Environment Variable</button>
              <button class="secondary">Import Variables</button>
            </div>
            {#each variables as [name, value]}
              <div class="row">
                <span class="name">{name}</span>
                <span class="value">{value}</span>
                <svg class="remove" viewBox="0 0 24 24"><path d="m2 2 20 20m0-20L2 22" stroke="#000" stroke-width="4" stroke-linecap="round" /></svg>
              </div>
            {/each}
          </div>
        </article>
      </div>
    </section>
  </main>

  <footer class="desktop">
    <div class="dock">
      {#each dockMain as d}
        <div class="slot" class:running={d.running}>{@render dockIcon(d.icon)}</div>
      {/each}
      <i class="divider"></i>
      {#each dockRecent as d}
        <div class="slot running">
          {@render dockIcon(d)}
          {#if d === 'outlook'}<span class="badge">751</span>{/if}
        </div>
      {/each}
      <i class="divider second"></i>
      <div class="slot">{@render dockIcon('trash')}</div>
    </div>
  </footer>
</div>

<style>
  :global(body) { margin: 0; background: #000; }
  .screen, .screen :global(*) { box-sizing: border-box; }
  .screen {
    width: 3840px; height: 2400px; overflow: hidden; display: flex; flex-direction: column;
    font-family: Inter, "Liberation Sans", sans-serif; color: #fff;
    background: linear-gradient(90deg, #26104a, #0a0626 50%, #1c0f5c);
  }
  svg { display: block; flex: none; overflow: visible; }
  button { border: 0; font: inherit; }

  .menubar {
    height: 48px; flex: none; display: flex; align-items: center; padding: 0 35px 0 39px;
    font-size: 26px; letter-spacing: -0.4px; color: #efe8f8; white-space: nowrap;
    background: linear-gradient(90deg, #6b1aa5, #6a1cba 25%, #681dc8 40%, #5f1ac3 58%, #5217b3 78%, #43129a);
  }
  .menubar span { text-shadow: 0 3px 5px rgba(20, 0, 50, .3); padding-bottom: 2px; }
  .apple { width: 28px; height: 34px; margin-bottom: 4px; }
  .menubar .app-name { width: 142px; margin-left: 39px; font-weight: 700; letter-spacing: -.9px; }
  .menu { flex: none; }
  .status { margin-left: auto; display: flex; align-items: center; }
  .s30 { width: 30px; height: 30px; margin-right: 47px; }
  .s-shield { width: 30px; height: 34px; margin-right: 38px; }
  .s-pac { width: 32px; height: 32px; margin-right: 36px; }
  .s-cloud { width: 42px; height: 36px; margin: 5px 40px 0 0; }
  .menubar .lang {
    width: 32px; height: 32px; margin-right: 38px; border-radius: 5px; background: #eee7fa; color: #4e15ab;
    font-size: 18px; line-height: 32px; font-weight: 600; text-align: center; text-shadow: none; padding: 0; letter-spacing: 0;
  }
  .s-batt { width: 52px; height: 26px; margin-right: 36px; }
  .s-wifi { width: 32px; height: 24px; margin-right: 38px; }
  .s-search { width: 28px; height: 26px; margin-right: 36px; }
  .s-cc { width: 30px; height: 26px; margin-right: 34px; }
  .clock { width: 236px; letter-spacing: -.5px; }

  .window {
    height: 2252px; margin-top: 2px; flex: none; display: flex; flex-direction: column;
    border-radius: 20px; overflow: hidden; background: #fff; box-shadow: 0 0 0 2px #000;
  }
  .tabstrip {
    height: 84px; flex: none; display: flex; align-items: flex-start; background: #1b381b;
    border-top: 2px solid #5d7d60; border-left: 2px solid #3d5b40; padding: 14px 34px 0 40px;
  }
  .lights { display: flex; gap: 16px; width: 146px; padding-top: 15px; flex: none; }
  .lights i { width: 24px; height: 24px; border-radius: 50%; }
  .red { background: #ff5f57; }
  .yellow { background: #febb40; }
  .green { background: #34c84a; }
  .tab {
    width: 148px; height: 68px; flex: none; display: flex; align-items: center; padding-left: 14px; position: relative;
    font-size: 24px; letter-spacing: -.2px;
    background: linear-gradient(#68806a, #68806a) right 0 top 15px / 2px 40px no-repeat;
  }
  .tab.wide { width: 150px; }
  .tab.last, .tab.active { background: none; }
  .favicon { width: 32px; height: 32px; }
  .tab-title {
    margin-left: 16px; width: 84px; white-space: nowrap;
    mask-image: linear-gradient(90deg, #000 48%, transparent 88%);
  }
  .tab.active { background: #2a5d2c; border-radius: 16px 16px 0 0; }
  .tab.active .tab-title { width: 34px; }
  .tab.active::before, .tab.active::after { content: ''; position: absolute; bottom: 0; width: 14px; height: 14px; }
  .tab.active::before { left: -14px; background: radial-gradient(circle at 0 0, transparent 14px, #2a5d2c 14px); }
  .tab.active::after { right: -14px; background: radial-gradient(circle at 100% 0, transparent 14px, #2a5d2c 14px); }
  .tab-close { width: 18px; height: 18px; margin-left: 12px; }
  .plus { width: 24px; height: 24px; margin: 21px 0 0 32px; }
  .chev { width: 20px; height: 12px; margin: 28px 0 0 auto; }

  .toolbar { height: 72px; flex: none; display: flex; align-items: center; background: #2a5d2c; padding: 0 41px 0 30px; }
  .t-back, .t-fwd, .t-reload { width: 28px; height: 28px; }
  .t-fwd, .t-reload { margin-left: 36px; }
  .omnibox {
    width: 3088px; height: 56px; margin-left: 30px; border-radius: 28px; background: #26482a;
    display: flex; align-items: center; padding: 0 20px 0 28px;
  }
  .lock { width: 16px; height: 22px; }
  .url { margin-left: 24px; font-size: 28px; letter-spacing: -.08px; white-space: nowrap; color: #a9b9aa; }
  .url b { font-weight: 400; color: #fff; letter-spacing: -.2px; }
  .share { width: 24px; height: 30px; margin-left: auto; }
  .star { width: 32px; height: 30px; margin-left: 35px; }
  .extensions {
    width: 312px; height: 56px; margin-left: 16px; border: 2px solid #447148; border-radius: 28px;
    display: flex; align-items: center; justify-content: space-between; padding: 0 12px;
  }
  .e-cmd, .e-puz { width: 28px; height: 28px; }
  .e-bug, .e-pen { width: 32px; height: 32px; }
  .e-vue { width: 32px; height: 28px; }
  .t-panel { width: 28px; height: 28px; margin-left: 22px; }
  .avatar {
    width: 44px; height: 44px; margin-left: 28px; border-radius: 50%; background: #5c6bc0;
    font: 26px/44px Roboto, sans-serif; text-align: center;
  }
  .t-dots { width: 6px; height: 26px; margin-left: auto; }

  .bookmarks {
    height: 66px; flex: none; display: flex; align-items: center; background: #2a5d2c; border-bottom: 2px solid #5c8a5f;
    padding: 0 22px 7px 30px; font-size: 24px; letter-spacing: -.2px; white-space: nowrap;
  }
  .bookmark { flex: none; display: flex; align-items: center; }
  .bm-icon { width: 32px; height: 32px; margin-right: 17px; }
  .node { width: 28px; height: 32px; margin-right: 18px; }
  .globe { width: 28px; height: 28px; }
  .other { margin-left: auto; display: flex; align-items: center; border-left: 2px solid #6b8d6d; padding-left: 19px; }

  .page { flex: 1; background: #fff; color: #161616; font-family: Roboto, sans-serif; display: flex; flex-direction: column; }
  .page-header { height: 162px; flex: none; border-bottom: 2px solid #d1d1d1; display: flex; align-items: center; padding: 0 48px 0 61px; }
  .back { width: 24px; height: 38px; }
  .book { width: 54px; height: 67px; margin-left: 56px; }
  .titles { margin: 8px 0 0 33px; display: flex; flex-direction: column; font-size: 28px; line-height: 48px; font-weight: 500; color: #000; }
  .titles strong { font-size: 40px; font-weight: 700; color: #161616; }
  .org {
    width: 429px; height: 72px; margin-left: auto; background: #f0f0f0; border-radius: 8px; color: #333;
    font-size: 32px; font-weight: 500; display: flex; align-items: center; gap: 20px; padding: 0 0 0 28px; white-space: nowrap;
  }
  .org svg { width: 40px; height: 40px; }

  .body { flex: 1; display: flex; padding: 38px 0 48px; }
  nav { width: 560px; border-right: 2px solid #d1d1d1; padding: 32px 48px 0; font-size: 32px; }
  nav a { height: 96px; padding: 0 32px; display: flex; align-items: center; }
  nav .current { background: #f0f0f0; font-weight: 700; }
  nav i { width: 16px; height: 16px; margin: 5px 0 0 16px; border-radius: 50%; background: #127ac9; }
  article { width: 2000px; margin-left: 640px; padding-top: 31px; font-size: 32px; line-height: 48px; white-space: nowrap; }
  h1 { margin: 0 0 47px; font-size: 56px; line-height: 72px; font-weight: 700; }
  p { margin: 0 0 48px; }
  p b { color: #0d64b0; font-weight: 700; letter-spacing: -.1px; }
  .card {
    border: 2px solid #e3e3e3; border-radius: 8px; padding: 48px; height: 1188px;
    box-shadow: 0 0 32px rgba(0, 0, 0, .07);
  }
  .row { height: 118px; display: flex; align-items: center; border-bottom: 2px solid #e3e3e3; }
  .row:last-child { border-bottom-color: transparent; }
  .head { height: 146px; font-weight: 700; }
  .name { width: 603px; }
  .value { flex: 1; }
  .head button { height: 80px; border-radius: 8px; font-size: 28px; font-weight: 500; padding: 0; }
  .head .primary { width: 388px; margin-right: 32px; background: #127ac9; color: #fff; }
  .head .secondary { width: 272px; background: #ededed; color: #333; }
  .remove { width: 24px; height: 24px; margin-right: 24px; }

  .desktop {
    flex: 1; display: flex; justify-content: center; align-items: flex-start; padding-top: 2px;
    background:
      linear-gradient(#000 0, transparent 80px),
      linear-gradient(90deg, #0e0828, #140a3c 30%, #170a44 64%, #4b1070 70%, #471070 78%, #1c0b4c 92%, #150a40);
  }
  .dock {
    width: 1635px; height: 86px; border: 2px solid rgba(255, 255, 255, .17); border-radius: 24px;
    background: linear-gradient(90deg, #1d1427, #1c1430 50%, #3a1748 78%, #39154e);
    display: flex; padding: 12px 11px 0; gap: 16px; box-shadow: 0 0 80px 12px rgba(0, 0, 0, .2);
  }
  .slot { width: 52px; height: 70px; position: relative; flex: none; }
  .app { width: 52px; height: 52px; }
  .running::after { content: ''; position: absolute; left: 22px; top: 60px; width: 8px; height: 8px; border-radius: 50%; background: #a896ba; }
  .divider { width: 2px; height: 62px; margin: -2px 8px 0 4px; background: #5d4d6c; flex: none; }
  .divider.second { margin: -2px 6px 0 6px; }
  .badge {
    position: absolute; left: 31px; top: -8px; width: 28px; height: 26px; border-radius: 13px; background: #f03c3c;
    font-size: 15px; line-height: 26px; text-align: center; letter-spacing: -.5px;
  }
  .cb { font: 700 20px Inter, sans-serif; letter-spacing: -1px; fill: #1d2b33; }
  .month { font: 600 11px Inter, sans-serif; fill: #fff; }
  .day { font: 300 32px Inter, sans-serif; fill: #222; }
  .tile-letter { font: 700 17px Inter, sans-serif; fill: #fff; }
</style>
